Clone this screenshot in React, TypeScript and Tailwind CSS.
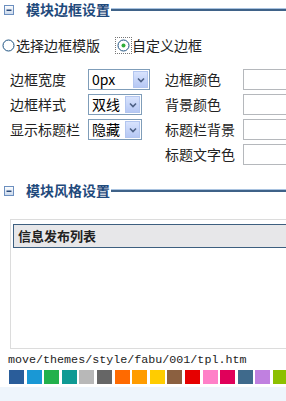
const CJK = { fontFamily: '"Noto Sans CJK SC", "Liberation Sans", sans-serif' };

const swatches = [
  '#2a5d9a', '#1a98d5', '#22b14c', '#0e9a94', '#b8b8b8', '#666666', '#ff6a00', '#ff9c00',
  '#ffcc00', '#8b6040', '#e60000', '#ff80c8', '#e0005a', '#3f6a8c', '#c080e0', '#8cc000',
];

function MinusBox() {
  return (
    <svg width="10" height="10" viewBox="0 0 10 10" className="shrink-0">
      <defs>
        <linearGradient id="mb" x1="0" y1="0" x2="0" y2="1">
          <stop offset="0" stopColor="#ffffff" />
          <stop offset="1" stopColor="#c9d8ec" />
        </linearGradient>
      </defs>
      <rect x="0.5" y="0.5" width="9" height="9" fill="url(#mb)" stroke="#6c8fbf" />
      <rect x="2.5" y="4.5" width="5" height="1.5" fill="#2a4a7a" />
    </svg>
  );
}

function Section({ title }: { title: string }) {
  return (
    <div className="flex items-center h-[19px]">
      <div className="ml-[4px] w-[22px] shrink-0"><MinusBox /></div>
      <span className="shrink-0 whitespace-nowrap text-[14px] font-bold leading-[19px] text-[#1f4a7c]" style={CJK}>{title}</span>
      <div className="flex-1 ml-[1px] flex flex-col">
        <div className="h-[1px] bg-[#a9c3e0]" />
        <div className="h-[2px] bg-[#3f6288]" />
      </div>
    </div>
  );
}

function Radio({ checked }: { checked?: boolean }) {
  return (
    <svg width="13" height="13" viewBox="0 0 13 13" className="shrink-0 block">
      <circle cx="6.5" cy="6.5" r="5.5" fill="#fff" stroke="#1c5180" />
      {checked && <circle cx="6.5" cy="6.5" r="2" fill="#2fae3a" />}
    </svg>
  );
}

function Select({ value, w }: { value: string; w: string }) {
  return (
    <div className={`${w} h-[21px] border border-[#7f9db9] bg-white flex items-center`}>
      <span className="flex-1 pl-[3px] whitespace-nowrap text-[14px] leading-[19px] text-black" style={CJK}>{value}</span>
      <div className="w-[15px] h-[17px] mr-[1px] shrink-0 bg-gradient-to-b from-[#d8e3fd] to-[#b6c8f4] border border-[#b3c6ef] flex items-center justify-center">
        <svg width="8" height="6" viewBox="0 0 8 6">
          <path d="M1 1.5 L4 4.5 L7 1.5" fill="none" stroke="#4d6185" strokeWidth="1.6" />
        </svg>
      </div>
    </div>
  );
}

export default function App() {
  const rows: { label: string; sel?: { value: string; w: string }; right: string }[] = [
    { label: '边框宽度', sel: { value: '0px', w: 'w-[62px]' }, right: '边框颜色' },
    { label: '边框样式', sel: { value: '双线', w: 'w-[54px]' }, right: '背景颜色' },
    { label: '显示标题栏', sel: { value: '隐藏', w: 'w-[54px]' }, right: '标题栏背景' },
    { label: '', right: '标题文字色' },
  ];

  return (
    <div className="w-[286px] h-[401px] bg-white overflow-hidden flex flex-col" style={CJK}>
      <Section title="模块边框设置" />

      {/* border source */}
      <div className="mt-[17px] h-[18px] flex items-center text-[14px] text-[#222] whitespace-nowrap">
        <div className="ml-[2px]"><Radio /></div>
        <span className="ml-[1px]">选择边框模版</span>
        <div className="ml-[15px] p-[1px] border border-dotted border-[#777]"><Radio checked /></div>
        <span>自定义边框</span>
      </div>

      {/* form */}
      <div className="mt-[15px] flex flex-col gap-[4px]">
        {rows.map((r) => (
          <div key={r.right} className="flex items-center h-[21px] w-max">
            <span className="ml-[10px] w-[78px] shrink-0 whitespace-nowrap text-[14px] text-[#222]">{r.label}</span>
            <div className="w-[77px] shrink-0">{r.sel && <Select value={r.sel.value} w={r.sel.w} />}</div>
            <span className="w-[78px] shrink-0 whitespace-nowrap text-[14px] text-[#222]">{r.right}</span>
            <div className="w-[60px] h-[21px] shrink-0 border border-[#b5b8bc] bg-white" />
          </div>
        ))}
      </div>

      <div className="mt-[16px]">
        <Section title="模块风格设置" />
      </div>

      {/* preview */}
      <div className="mt-[19px] ml-[10px] w-[300px] h-[130px] shrink-0 border border-[#dcdcdc] pl-[2px] pt-[4px]">
        <div className="h-[24px] border border-[#3d5f7f] bg-[#e7e7e9] flex items-center pl-[4px]">
          <span className="text-[13px] font-bold text-[#222]">信息发布列表</span>
        </div>
      </div>

      <div
        className="mt-[3px] ml-[8px] h-[16px] text-[11.7px] leading-[16px] text-[#222] whitespace-nowrap"
        style={{ fontFamily: '"Liberation Mono", monospace' }}
      >
        move/themes/style/fabu/001/tpl.htm
      </div>

      <div className="mt-[2px] ml-[9px] flex gap-[2.6px]">
        {swatches.map((c) => (
          <div key={c} className="w-[15px] h-[14px] shrink-0" style={{ backgroundColor: c }} />
        ))}
      </div>

      <div className="mt-[3px] flex-1 bg-[#eef5fc]" />
    </div>
  );
}
